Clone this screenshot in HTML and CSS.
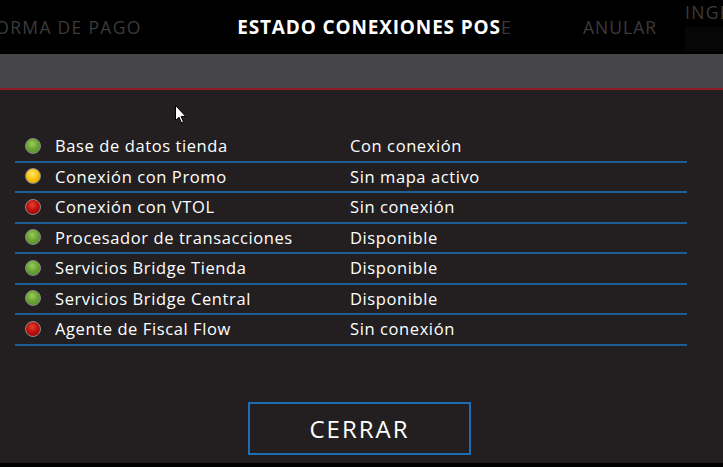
FILE: index.html
```html
<!DOCTYPE html>
<html lang="es">
<head>
<meta charset="utf-8">
<title>Estado conexiones POS</title>
<link rel="stylesheet" href="styles.css">
</head>
<body>
<div class="screen">
  <header class="topbar">
    <nav class="ghost-nav">
      <span class="ghost g-forma">FORMA DE PAGO</span>
      <span class="ghost g-e">E</span>
      <span class="ghost g-anular">ANULAR</span>
      <div class="g-ingr-col">
        <span class="ghost g-ingr">INGR</span>
        <span class="g-box"></span>
      </div>
    </nav>
    <h1 class="title">ESTADO CONEXIONES POS</h1>
  </header>
  <div class="graybar"></div>
  <div class="redline"></div>
  <main class="panel">
    <svg class="cursor" width="12" height="19" viewBox="0 0 12 19"><path d="M0.5 0.5 L0.5 15.5 L4 12.2 L6.6 18 L8.6 17.1 L6.1 11.4 L10.8 11.4 Z" fill="#fff" stroke="#000" stroke-width="1"/></svg>
    <div class="table">
      <div class="row"><span class="dot green"></span><span class="name">Base de datos tienda</span><span class="status">Con conexión</span></div>
      <div class="row"><span class="dot yellow"></span><span class="name">Conexión con Promo</span><span class="status">Sin mapa activo</span></div>
      <div class="row"><span class="dot red"></span><span class="name">Conexión con VTOL</span><span class="status">Sin conexión</span></div>
      <div class="row"><span class="dot green"></span><span class="name">Procesador de transacciones</span><span class="status">Disponible</span></div>
      <div class="row"><span class="dot green"></span><span class="name">Servicios Bridge Tienda</span><span class="status">Disponible</span></div>
      <div class="row"><span class="dot green"></span><span class="name">Servicios Bridge Central</span><span class="status">Disponible</span></div>
      <div class="row"><span class="dot red"></span><span class="name">Agente de Fiscal Flow</span><span class="status">Sin conexión</span></div>
    </div>
    <button class="close-btn" type="button">CERRAR</button>
  </main>
  <div class="bottomstrip"></div>
</div>
</body>
</html>
```
FILE: styles.css
```css
* { box-sizing: border-box; }
html, body {
  margin: 0;
  padding: 0;
  background: #000;
  width: 723px;
  height: 467px;
  overflow: hidden;
}
body {
  font-family: "Open Sans", "Noto Sans", "Liberation Sans", sans-serif;
  color: #fff;
}
.screen {
  width: 723px;
  height: 467px;
  display: flex;
  flex-direction: column;
  overflow: hidden;
}
.topbar {
  height: 54px;
  background: #000;
  display: grid;
  overflow: hidden;
}
.ghost-nav, .title {
  grid-area: 1 / 1;
}
.ghost-nav {
  display: flex;
  align-items: center;
  height: 54px;
}
.ghost {
  color: #3b3b3b;
  font-size: 17.5px;
  letter-spacing: 1.3px;
  white-space: nowrap;
  flex: none;
}
.g-forma { width: 516px; margin-left: -15px; }
.g-e { width: 82px; }
.g-anular { width: 102px; letter-spacing: 1px; }
.g-ingr-col {
  align-self: stretch;
  display: flex;
  flex-direction: column;
  flex: none;
}
.g-ingr {
  margin-top: 1px;
  line-height: 22px;
}
.g-box {
  margin-top: 4px;
  height: 25px;
  width: 60px;
  background: #060606;
}
.title {
  margin: 0 0 0 -7px;
  justify-self: center;
  align-self: center;
  font-size: 19px;
  font-weight: 700;
  letter-spacing: 0.85px;
  color: #fff;
  position: relative;
}
.graybar {
  height: 34px;
  background: #464648;
}
.redline {
  height: 2px;
  background: #8d1a24;
}
.panel {
  position: relative;
  flex: 1;
  background: #231f20;
  padding-top: 42px;
  display: flex;
  flex-direction: column;
}
.cursor {
  position: absolute;
  left: 175px;
  top: 15px;
}
.table {
  margin-left: 15px;
  width: 672px;
}
.row {
  height: 30.5px;
  border-bottom: 2px solid #1f5e94;
  display: flex;
  align-items: center;
  padding-left: 10px;
  padding-bottom: 1px;
  font-size: 16.5px;
  font-weight: 500;
  letter-spacing: 0.6px;
}
.dot {
  width: 16px;
  height: 16px;
  border-radius: 50%;
  border: 1px solid #8b8b8b;
  flex: none;
  margin-right: 14px;
}
.dot.green {
  background: radial-gradient(circle at 45% 35%, #9ccd55 0%, #6aa535 45%, #4b8422 100%);
}
.dot.yellow {
  background: radial-gradient(circle at 45% 35%, #ffe873 0%, #f8c40e 45%, #e09a00 100%);
}
.dot.red {
  background: radial-gradient(circle at 45% 35%, #e8402e 0%, #bf120f 45%, #880202 100%);
}
.name {
  width: 295px;
  flex: none;
  white-space: nowrap;
}
.status {
  white-space: nowrap;
}
.close-btn {
  margin-top: 56px;
  margin-left: 248px;
  width: 223px;
  height: 53px;
  background: transparent;
  border: 2px solid #1e6db3;
  color: #fff;
  font-family: inherit;
  font-size: 24px;
  letter-spacing: 2px;
  padding: 0 0 0 0;
}
.bottomstrip {
  height: 4px;
  background: #000;
}
```
